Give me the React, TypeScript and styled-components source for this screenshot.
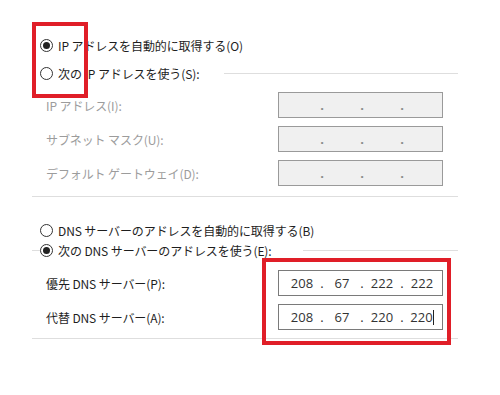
import styled, { createGlobalStyle } from "styled-components";

const GlobalStyle = createGlobalStyle`
  html, body {
    margin: 0;
    padding: 0;
    background: #ffffff;
  }
  body {
    font-family: "Noto Sans CJK JP", "Noto Sans", sans-serif;
    font-size: 12px;
    color: #1e1e1e;
  }
`;

const Page = styled.div`
  position: relative;
  width: 500px;
  height: 395px;
  padding: 35px 0 0 32px;
  box-sizing: border-box;
`;

const Panel = styled.div`
  width: 426px;
  display: flex;
  flex-direction: column;
`;

const OptionRow = styled.div<{ gap?: number }>`
  display: flex;
  align-items: center;
  height: 20px;
  padding-left: 8px;
  margin-top: ${(p) => (p.gap ? p.gap + "px" : "0")};
  white-space: nowrap;
`;

const HeaderRow = styled.div<{ after?: number }>`
  display: flex;
  align-items: center;
  height: 20px;
  margin-bottom: ${(p) => (p.after ? p.after + "px" : "0")};
  white-space: nowrap;
`;

const Rule = styled.div<{ lead?: number; width?: number }>`
  height: 1px;
  background: #dedede;
  margin-left: ${(p) => (p.lead ? p.lead + "px" : "0")};
  ${(p) => (p.width ? `width: ${p.width}px;` : "flex: 1;")}
`;

const OptionText = styled.span`
  margin-left: 5px;
  font-size: 12px;
  letter-spacing: -0.1px;
  color: #1e1e1e;
`;

const Group = styled.div<{ top: number; bottom: number }>`
  display: flex;
  flex-direction: column;
  gap: 8px;
  padding-top: ${(p) => p.top}px;
  padding-bottom: ${(p) => p.bottom}px;
  border-bottom: 1px solid #dedede;
`;

const FieldRow = styled.div`
  display: flex;
  align-items: center;
  justify-content: space-between;
  height: 26px;
  padding-left: 14px;
  padding-right: 15px;
`;

const FieldLabel = styled.span<{ disabled?: boolean }>`
  font-size: 12px;
  letter-spacing: -0.1px;
  color: ${(p) => (p.disabled ? "#9c9c9c" : "#1e1e1e")};
`;

const IpBox = styled.div<{ disabled?: boolean }>`
  width: 165px;
  height: 26px;
  box-sizing: border-box;
  border: 1px solid ${(p) => (p.disabled ? "#9a9a9a" : "#7a7a7a")};
  background: ${(p) => (p.disabled ? "#f0f0f0" : "#ffffff")};
  display: grid;
  grid-template-columns: 34px 6px 34px 6px 34px 6px 34px;
  align-items: center;
  padding-left: 6px;
  font-family: "Open Sans", "Noto Sans", sans-serif;
  font-size: 13px;
  color: #333333;
`;

const Octet = styled.span`
  text-align: center;
  line-height: 24px;
`;

const Dot = styled.span<{ disabled?: boolean }>`
  text-align: center;
  line-height: 24px;
  color: ${(p) => (p.disabled ? "#8a8a8a" : "#333333")};
  font-weight: ${(p) => (p.disabled ? 700 : 400)};
`;

const Caret = styled.span`
  display: inline-block;
  width: 1px;
  height: 15px;
  background: #222;
  vertical-align: -3px;
`;

const Highlight = styled.div<{ x: number; y: number; w: number; h: number }>`
  position: absolute;
  left: ${(p) => p.x}px;
  top: ${(p) => p.y}px;
  width: ${(p) => p.w}px;
  height: ${(p) => p.h}px;
  box-sizing: border-box;
  border: 4px solid #e01e28;
  pointer-events: none;
`;

const Radio = ({ checked }: { checked?: boolean }) => (
  <svg width="13" height="13" viewBox="0 0 13 13" style={{ flexShrink: 0 }}>
    <circle cx="6.5" cy="6.5" r="6" fill="#fff" stroke="#333" strokeWidth="1" />
    {checked && <circle cx="6.5" cy="6.5" r="3.5" fill="#222" />}
  </svg>
);

const IpField = ({
  values,
  disabled,
  caret,
}: {
  values?: string[];
  disabled?: boolean;
  caret?: boolean;
}) => {
  const parts = values || ["", "", "", ""];
  const cells: JSX.Element[] = [];
  parts.forEach((v, i) => {
    if (i > 0)
      cells.push(
        <Dot key={"d" + i} disabled={disabled}>
          .
        </Dot>
      );
    cells.push(
      <Octet key={"o" + i}>
        {v}
        {caret && i === 3 && <Caret />}
      </Octet>
    );
  });
  return <IpBox disabled={disabled}>{cells}</IpBox>;
};

export default function App() {
  return (
    <>
      <GlobalStyle />
      <Page>
        <Panel>
          <OptionRow>
            <Radio checked />
            <OptionText>IP アドレスを自動的に取得する(O)</OptionText>
          </OptionRow>

          <Group top={8} bottom={10}>
            <HeaderRow after={1}>
              <OptionRow>
                <Radio />
                <OptionText>次の IP アドレスを使う(S):</OptionText>
              </OptionRow>
              <Rule lead={25} />
            </HeaderRow>
            <FieldRow>
              <FieldLabel disabled>IP アドレス(I):</FieldLabel>
              <IpField disabled />
            </FieldRow>
            <FieldRow>
              <FieldLabel disabled>サブネット マスク(U):</FieldLabel>
              <IpField disabled />
            </FieldRow>
            <FieldRow>
              <FieldLabel disabled>デフォルト ゲートウェイ(D):</FieldLabel>
              <IpField disabled />
            </FieldRow>
          </Group>

          <OptionRow gap={23}>
            <Radio />
            <OptionText>DNS サーバーのアドレスを自動的に取得する(B)</OptionText>
          </OptionRow>

          <Group top={0} bottom={8}>
            <HeaderRow after={2}>
              <Rule width={8} />
              <OptionRow style={{ paddingLeft: 0 }}>
                <Radio checked />
                <OptionText>次の DNS サーバーのアドレスを使う(E):</OptionText>
              </OptionRow>
              <Rule lead={31} />
            </HeaderRow>
            <FieldRow>
              <FieldLabel>優先 DNS サーバー(P):</FieldLabel>
              <IpField values={["208", "67", "222", "222"]} />
            </FieldRow>
            <FieldRow>
              <FieldLabel>代替 DNS サーバー(A):</FieldLabel>
              <IpField values={["208", "67", "220", "220"]} caret />
            </FieldRow>
          </Group>
        </Panel>

        <Highlight x={32} y={22} w={56} h={76} />
        <Highlight x={262} y={258} w={189} h={87} />
      </Page>
    </>
  );
}
